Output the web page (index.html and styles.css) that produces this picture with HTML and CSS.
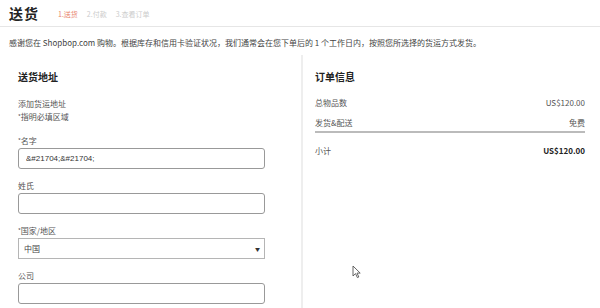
FILE: index.html
```html
<!DOCTYPE html>
<html lang="zh-CN">
<head>
<meta charset="utf-8">
<title>送货</title>
<link rel="stylesheet" href="styles.css">
</head>
<body>
<div class="m-head">
	<div class="title">送货</div>
	<div class="steps"><span class="on">1.送货</span><span>2.付款</span><span>3.查看订单</span></div>
</div>
<div class="intro">感谢您在 Shopbop.com 购物。根据库存和信用卡验证状况，我们通常会在您下单后的 1 个工作日内，按照您所选择的货运方式发货。</div>
<div class="m-main">
	<div class="addr">
		<div class="hd">送货地址</div>
		<div class="desc">添加货运地址</div>
		<div class="must"><i>*</i>指明必填区域</div>
		<div class="field">
			<label><i>*</i>名字</label>
			<input type="text" class="ipt" value="&amp;#21704;&amp;#21704;">
		</div>
		<div class="field">
			<label>姓氏</label>
			<input type="text" class="ipt" value="">
		</div>
		<div class="field">
			<label><i>*</i>国家/地区</label>
			<div class="sel"><span>中国</span><b>▼</b></div>
		</div>
		<div class="field">
			<label>公司</label>
			<input type="text" class="ipt" value="">
		</div>
	</div>
	<div class="order">
		<div class="hd">订单信息</div>
		<div class="row"><span>总物品数</span><span>US$120.00</span></div>
		<div class="row line"><span>发货&amp;配送</span><span>免费</span></div>
		<div class="row total"><span>小计</span><span>US$120.00</span></div>
	</div>
</div>
<svg class="cursor" width="9" height="14" viewBox="0 0 9 14"><path d="M1 1 L1 11 L3.5 8.6 L5.4 12.6 L6.8 12 L5 8.1 L8.2 8.1 Z" fill="#fff" stroke="#555" stroke-width="0.9" stroke-linejoin="round"/></svg>
</body>
</html>
```

FILE: styles.css
```css
html,body{height:308px;overflow:hidden;}
body{margin:0;background:#fff;color:#333;font-family:"Noto Sans CJK SC","Liberation Sans",sans-serif;font-size:8px;}
.m-head{display:flex;align-items:center;height:26px;padding-left:9px;border-bottom:1px solid #e6e6e6;}
.m-head .title{font-size:14px;font-weight:bold;color:#222;width:49px;letter-spacing:1px;}
.m-head .steps span{font-size:7px;color:#ccc;margin-right:9px;}
.m-head .steps .on{color:#e8826a;}
.intro{padding:10px 0 0 9px;height:18px;color:#444;font-size:8px;}
.m-main{display:flex;padding-left:18px;height:263px;overflow:hidden;}
.addr{width:247px;padding-top:13px;}
.addr .hd,.order .hd{font-size:10px;font-weight:bold;color:#222;height:20px;line-height:18px;}
.addr .desc{margin-top:10px;color:#555;line-height:12px;}
.addr .must{color:#555;line-height:12px;margin-top:1px;padding-bottom:1px;}
.addr i{font-style:normal;font-size:6px;vertical-align:top;color:#555;}
.field{margin-top:11px;}
.field label{display:block;color:#555;line-height:11px;height:13px;}
.field .ipt{display:block;box-sizing:border-box;width:247px;height:21px;border:1px solid #999;border-radius:3px;padding:0 7px;font-family:"Liberation Sans",sans-serif;font-size:8px;color:#333;outline:none;}
.field .sel{display:flex;justify-content:space-between;align-items:center;box-sizing:border-box;width:247px;height:21px;border:1px solid #b5b5b5;padding:0 4px 0 5px;color:#444;}
.field .sel b{font-weight:normal;font-size:5px;color:#333;}
.order{flex:1;margin-left:36px;margin-right:15px;border-left:2px solid #eee;padding:13px 0 0 12px;}
.order .row{display:flex;justify-content:space-between;color:#555;line-height:12px;margin-top:9px;}
.order .row.line{padding-bottom:2px;border-bottom:2px solid #bbb;margin-top:8px;}
.order .row.total{margin-top:12px;color:#555;}
.order .row.total span:last-child{font-weight:bold;color:#222;}
.cursor{position:absolute;left:352px;top:265px;}
```
